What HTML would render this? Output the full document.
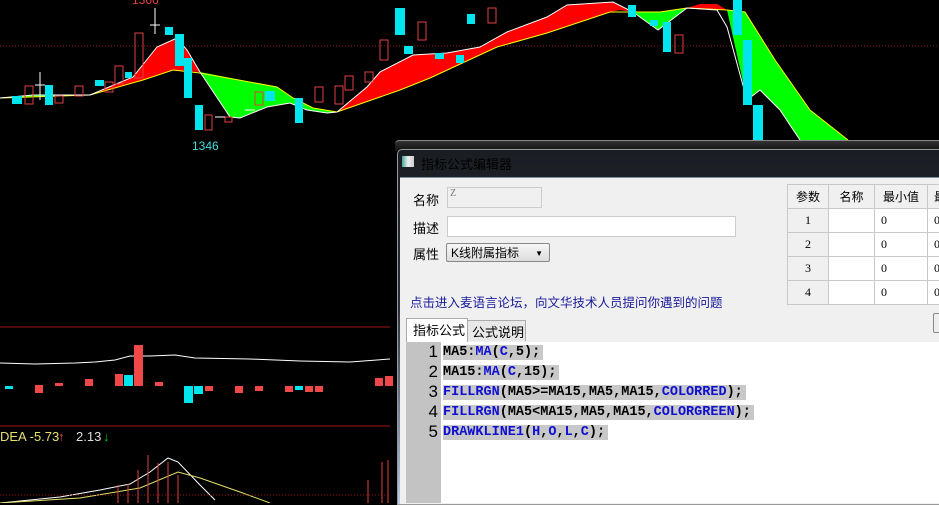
<!DOCTYPE html>
<html><head><meta charset="utf-8"><style>
body{margin:0;width:939px;height:503px;background:#000;position:relative;overflow:hidden;font-family:"Liberation Sans","Noto Sans CJK SC",sans-serif}
.a{position:absolute}
.cn{font-family:"Liberation Sans","Noto Sans CJK SC",sans-serif;font-size:13px;color:#000}
.code{font-family:"Liberation Mono",monospace;font-size:13.5px;font-weight:bold;color:#000;line-height:20px;height:20px;white-space:pre}
.code span.sel{background:#c8c8c8;padding-right:3px}
.k{color:#1010d0}
.ln{font-family:"Liberation Sans",sans-serif;font-size:17px;color:#000;width:30px;text-align:right;left:408px}
table{table-layout:fixed}
td{border:1px solid #c8c8c8;height:23px;font-size:12px;font-family:"Liberation Serif","Noto Sans CJK SC",serif;padding:0 0 0 6px;overflow:hidden;white-space:nowrap}
</style></head><body>
<svg class="a" style="left:0;top:0" width="939" height="503">
<line x1="0" y1="46" x2="939" y2="46" stroke="#8a1a1a" stroke-dasharray="1,2"/>
<!-- fills -->
<path d="M90 95 L133 77 L157 47 L177 38 L187 50 L200 72 L173 70 L143 80 Z" fill="#f00"/>
<path d="M0 98 L33 95 L90 95 L60 96 Z" fill="#0f0"/>
<path d="M200 72 L230 117 L240 118 L267 107 L290 103 L307 110 L327 113 L337 112 L313 108 L293 98 L277 87 Z" fill="#0f0"/>
<path d="M337 112 L367 87 L380 72 L413 55 L447 53 L480 47 L507 32 L547 17 L567 5 L613 2 L633 12 L620 10 L610 12 L547 33 L497 47 L430 78 L400 90 Z" fill="#f00"/>
<path d="M633 12 L658 30 L687 8 L660 12 Z" fill="#0f0"/>
<path d="M687 8 L700 4 L717 4 L727 10 L717 10 Z" fill="#f00"/>
<path d="M727 10 L745 12 L775 60 L810 110 L848 140 L800 140 L780 110 L760 90 L747 100 Z" fill="#0f0"/>
<!-- MA lines -->
<path d="M0 98 L90 95 L143 80 L173 70 L200 73 L277 87 L293 98 L313 108 L337 112 L400 90 L430 78 L497 47 L547 33 L610 12 L660 12 L687 8 L727 10 L745 12 L775 60 L810 110 L848 140" stroke="#ff0" stroke-width="1" fill="none"/>
<path d="M0 98 L33 95 L90 95 L133 77 L157 47 L177 38 L187 50 L200 72 L230 117 L240 118 L267 107 L290 103 L307 110 L327 113 L337 112 L367 87 L380 72 L413 55 L447 53 L480 47 L507 32 L547 17 L567 5 L613 2 L633 12 L658 30 L687 8 L717 10 L727 27 L747 100 L760 90 L780 110 L800 140" stroke="#fff" stroke-width="1" fill="none"/>
<!-- candles -->
<g fill="#00e5ee"><rect x="12" y="96" width="10" height="8"/><rect x="45" y="85" width="8" height="20"/><rect x="95" y="80" width="9" height="6"/><rect x="125" y="72" width="7" height="6"/><rect x="165" y="27" width="8" height="8"/><rect x="175" y="34" width="9" height="32"/><rect x="184" y="58" width="8" height="40"/><rect x="195" y="105" width="8" height="25"/><rect x="295" y="98" width="8" height="25"/><rect x="265" y="91" width="10" height="10"/><rect x="395" y="8" width="10" height="27"/><rect x="404" y="46" width="9" height="8"/><rect x="435" y="53" width="9" height="6"/><rect x="456" y="55" width="8" height="8"/><rect x="467" y="14" width="8" height="10"/><rect x="628" y="5" width="8" height="12"/><rect x="650" y="20" width="8" height="6"/><rect x="663" y="22" width="8" height="30"/><rect x="733" y="0" width="9" height="35"/><rect x="743" y="40" width="9" height="65"/><rect x="753" y="105" width="10" height="35"/></g>
<g fill="none" stroke="#e04040"><rect x="25" y="86" width="8" height="18"/><rect x="55" y="96" width="8" height="7"/><rect x="75" y="86" width="8" height="10"/><rect x="105" y="82" width="8" height="10"/><rect x="115" y="66" width="8" height="18"/><rect x="135" y="33" width="8" height="45"/><rect x="205" y="115" width="7" height="15"/><rect x="225" y="117" width="7" height="5"/><rect x="255" y="92" width="8" height="13"/><rect x="315" y="87" width="8" height="15"/><rect x="335" y="86" width="8" height="18"/><rect x="345" y="76" width="8" height="14"/><rect x="365" y="72" width="8" height="10"/><rect x="380" y="40" width="8" height="20"/><rect x="418" y="22" width="8" height="18"/><rect x="488" y="8" width="8" height="15"/><rect x="675" y="35" width="8" height="18"/></g>
<g stroke="#fff"><line x1="35" y1="85" x2="45" y2="85"/><line x1="40" y1="72" x2="40" y2="100"/><line x1="150" y1="25" x2="160" y2="25"/><line x1="155" y1="8" x2="155" y2="34"/><line x1="215" y1="117" x2="225" y2="117"/><line x1="245" y1="110" x2="255" y2="110"/></g>
<text x="192" y="150" fill="#4dd" font-size="12" font-family="Liberation Sans">1346</text>
<text x="132" y="4" fill="#e04040" font-size="12" font-family="Liberation Sans">1366</text>
<!-- lower panels -->
<line x1="0" y1="327" x2="390" y2="327" stroke="#a01818"/>
<line x1="0" y1="426" x2="390" y2="426" stroke="#a01818"/>
<path d="M0 363 L35 364 L75 363 L95 362 L115 360 L130 356 L150 356 L175 355 L195 358 L250 359 L300 361 L350 362 L390 359" stroke="#fff" fill="none"/>
<g fill="#f04848"><rect x="35" y="385" width="8" height="8"/><rect x="55" y="383" width="8" height="3"/><rect x="85" y="379" width="8" height="7"/><rect x="115" y="374" width="8" height="12"/><rect x="134" y="345" width="9" height="41"/><rect x="155" y="382" width="8" height="4"/><rect x="205" y="386" width="8" height="5"/><rect x="235" y="386" width="8" height="7"/><rect x="255" y="386" width="8" height="5"/><rect x="285" y="386" width="8" height="6"/><rect x="305" y="386" width="8" height="6"/><rect x="315" y="386" width="8" height="6"/><rect x="375" y="378" width="8" height="8"/><rect x="385" y="376" width="8" height="10"/></g>
<g fill="#00e5ee"><rect x="5" y="386" width="8" height="3"/><rect x="124" y="375" width="9" height="11"/><rect x="184" y="386" width="9" height="17"/><rect x="194" y="386" width="9" height="8"/><rect x="295" y="386" width="8" height="4"/></g>
<text x="0" y="441" fill="#e6e06a" font-size="13" font-family="Liberation Sans">DEA -5.73</text>
<text x="58" y="441" fill="#f04848" font-size="13">↑</text>
<text x="76" y="441" fill="#ddd" font-size="13" font-family="Liberation Sans">2.13</text>
<text x="103" y="441" fill="#0c0" font-size="13">↓</text>
<path d="M0 503 L60 497 L100 490 L130 484 L150 472 L168 458 L178 462 L200 485 L215 500" stroke="#fff" fill="none"/>
<path d="M0 503 L80 498 L140 488 L178 472 L200 478 L240 492 L270 503" stroke="#e6e06a" fill="none"/>
<g stroke="#e04040"><line x1="148" y1="455" x2="148" y2="503"/><line x1="158" y1="463" x2="158" y2="503"/><line x1="168" y1="462" x2="168" y2="503"/><line x1="178" y1="475" x2="178" y2="503"/><line x1="138" y1="470" x2="138" y2="503"/><line x1="128" y1="484" x2="128" y2="503"/><line x1="118" y1="485" x2="118" y2="503"/><line x1="382" y1="462" x2="382" y2="503"/><line x1="388" y1="460" x2="388" y2="503"/><line x1="368" y1="480" x2="368" y2="503"/></g>
<line x1="0" y1="495" x2="390" y2="495" stroke="#a01818" stroke-dasharray="1,2"/>
</svg>
<div class="a" style="left:395px;top:140px;width:544px;height:10px;background:linear-gradient(#333,#111);border-top:1px solid #888;border-radius:4px 0 0 0"></div>
<div class="a" style="left:397px;top:149px;width:542px;height:354px;background:linear-gradient(#1a1d22 0,#2a3038 45%,#b8cde8 100%);border:1px solid #999;border-radius:5px 0 0 0"></div>
<div class="a" style="left:402px;top:156px;width:12px;height:11px;background:linear-gradient(90deg,#4a9,#eee 50%,#ccc)"></div>
<div class="a cn" style="left:421px;top:154px;color:#000;font-size:13px">指标公式编辑器</div>
<div class="a" style="left:400px;top:177px;width:539px;height:326px;background:#f0f0f0;border-top:1px solid #7a8a9a"></div>
<div class="a cn" style="left:413px;top:190px">名称</div>
<div class="a" style="left:447px;top:187px;width:91px;height:19px;background:#f0f0f0;border:1px solid #ccc;font-family:'Liberation Serif';font-size:10px;color:#777;padding-left:2px">Z</div>
<div class="a cn" style="left:413px;top:218px">描述</div>
<div class="a" style="left:447px;top:216px;width:287px;height:19px;background:#fff;border:1px solid #ccc"></div>
<div class="a cn" style="left:413px;top:244px">属性</div>
<div class="a" style="left:446px;top:243px;height:19px;background:linear-gradient(#f6f6f6,#ddd);border:1px solid #888;border-radius:2px;font-size:12px;line-height:19px;padding-left:4px;box-sizing:border-box;width:104px">K线附属指标<span style="position:absolute;right:6px;top:0;font-size:8px">▼</span></div>
<div class="a cn" style="left:410px;top:292px;color:#1a1a9a;font-size:12.5px">点击进入麦语言论坛，向文华技术人员提问你遇到的问题</div>
<div class="a" style="left:406px;top:318px;width:60px;height:24px;background:#fff;border:1px solid #aaa;border-bottom:none"></div>
<div class="a cn" style="left:413px;top:320px">指标公式</div>
<div class="a" style="left:467px;top:320px;width:57px;height:20px;background:#e8e8e8;border:1px solid #aaa;border-bottom:none"></div>
<div class="a cn" style="left:472px;top:322px">公式说明</div>
<div class="a" style="left:406px;top:342px;width:533px;height:161px;background:#fff"></div>
<div class="a" style="left:406px;top:342px;width:35px;height:161px;background:#c3c3c3"></div>
<div class="a ln" style="top:342px">1</div><div class="a ln" style="top:362px">2</div><div class="a ln" style="top:382px">3</div><div class="a ln" style="top:402px">4</div><div class="a ln" style="top:422px">5</div>
<div class="a code" style="left:443px;top:343px"><span class="sel">MA5:<span class="k">MA</span>(<span class="k">C</span>,5);</span></div>
<div class="a code" style="left:443px;top:363px"><span class="sel">MA15:<span class="k">MA</span>(<span class="k">C</span>,15);</span></div>
<div class="a code" style="left:443px;top:383px"><span class="sel"><span class="k">FILLRGN</span>(MA5&gt;=MA15,MA5,MA15,<span class="k">COLORRED</span>);</span></div>
<div class="a code" style="left:443px;top:403px"><span class="sel"><span class="k">FILLRGN</span>(MA5&lt;MA15,MA5,MA15,<span class="k">COLORGREEN</span>);</span></div>
<div class="a code" style="left:443px;top:423px"><span class="sel"><span class="k">DRAWKLINE1</span>(<span class="k">H</span>,<span class="k">O</span>,<span class="k">L</span>,<span class="k">C</span>);</span></div>
<table class="a" style="left:787px;top:184px;width:200px;border-collapse:collapse;background:#fff;border:1px solid #aaa">
<colgroup><col style="width:41px"><col style="width:46px"><col style="width:53px"><col style="width:60px"></colgroup>
<tr style="background:#f0f0f0"><td style="text-align:center;padding:0">参数</td><td style="text-align:center;padding:0">名称</td><td style="text-align:center;padding:0">最小值</td><td style="padding-left:6px">最大值</td></tr>
<tr><td style="text-align:center;padding:0;background:#f0f0f0">1</td><td></td><td>0</td><td>0</td></tr>
<tr><td style="text-align:center;padding:0;background:#f0f0f0">2</td><td></td><td>0</td><td>0</td></tr>
<tr><td style="text-align:center;padding:0;background:#f0f0f0">3</td><td></td><td>0</td><td>0</td></tr>
<tr><td style="text-align:center;padding:0;background:#f0f0f0">4</td><td></td><td>0</td><td>0</td></tr>
</table>
<div class="a" style="left:933px;top:313px;width:10px;height:18px;border:1px solid #888;border-radius:2px;background:#eee"></div>
</body></html>
